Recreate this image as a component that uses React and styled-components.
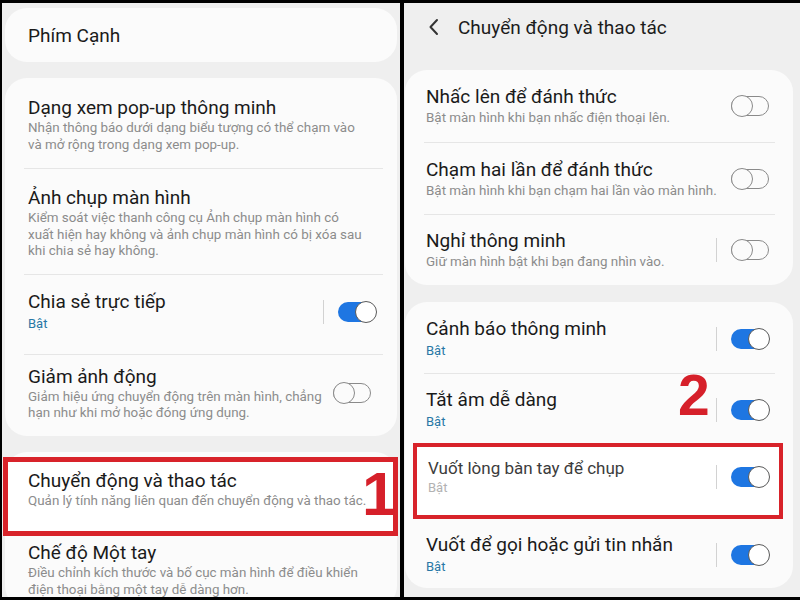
import React from 'react';
import styled, { createGlobalStyle } from 'styled-components';

const GlobalStyle = createGlobalStyle`
  html, body { margin: 0; padding: 0; background: #000; }
  body { font-family: Roboto, "Noto Sans", "Liberation Sans", sans-serif; }
`;

const Frame = styled.div`
  width: 800px;
  height: 600px;
  box-sizing: border-box;
  padding: 3px 0 3px 2px;
  display: grid;
  grid-template-columns: 398px 1fr;
  column-gap: 4px;
  background: #000;
`;

const Panel = styled.div`
  background: #efefef;
  overflow: hidden;
  display: flex;
  flex-direction: column;
  padding: ${({ $pad }) => $pad};
`;

const Header = styled.div`
  height: 48px;
  display: flex;
  align-items: center;
  padding-left: 24px;
  margin-bottom: 19px;
  color: #1c1c1c;
  font-size: 19px;
  gap: 18px;
`;

const Card = styled.div`
  background: #fbfbfb;
  border-radius: 22px;
  padding: ${({ $pad }) => $pad || '0 14px 0 19px'};
  margin: ${({ $margin }) => $margin || '0 3px 16px'};
  flex: none;
`;

const Row = styled.div`
  position: relative;
  display: flex;
  align-items: center;
  padding: ${({ $pad }) => $pad || '15px 6px 14px 4px'};
  border-top: ${({ $line }) => ($line ? '1px solid #e6e6e6' : 'none')};
`;

const BoxedRow = styled(Row)`
  border: ${({ $bw }) => $bw}px solid #d8232a;
  background: #fff;
  margin: ${({ $margin }) => $margin};
`;

const Texts = styled.div`
  flex: 1;
  min-width: 0;
`;

const Title = styled.div`
  font-size: ${({ $small }) => ($small ? '17px' : '19px')};
  line-height: ${({ $small }) => ($small ? '22px' : '24px')};
  color: ${({ $small }) => ($small ? '#3c3c3c' : '#1a1a1a')};
  white-space: nowrap;
`;

const Sub = styled.div`
  font-size: 13.4px;
  line-height: ${({ $lh }) => $lh || '16.5px'};
  color: #8c8c8c;
  white-space: nowrap;
`;

const Status = styled.div`
  font-size: 13px;
  line-height: ${({ $lh }) => $lh || '20px'};
  color: ${({ $muted }) => ($muted ? '#b2b2b2' : '#2878a6')};
`;

const Sep = styled.span`
  width: 1px;
  height: 24px;
  background: #d2d2d2;
  margin-right: 14px;
  flex: none;
`;

const Toggle = styled.span`
  position: relative;
  width: 39px;
  height: 24px;
  flex: none;
  &::before {
    content: '';
    position: absolute;
    left: 0;
    top: 2px;
    width: 38px;
    height: 20px;
    border-radius: 10px;
    box-sizing: border-box;
    background: ${({ $on }) => ($on ? '#1e76e2' : 'transparent')};
    border: ${({ $on }) => ($on ? 'none' : '1.5px solid #8a8a8a')};
  }
  &::after {
    content: '';
    position: absolute;
    top: 1px;
    ${({ $on }) => ($on ? 'right: 0;' : 'left: 0;')}
    width: 22px;
    height: 22px;
    border-radius: 50%;
    box-sizing: border-box;
    background: ${({ $on }) => ($on ? '#fff' : '#fbfbfb')};
    border: 1.5px solid ${({ $on }) => ($on ? '#5a5a5a' : '#8a8a8a')};
  }
`;

const Mark = styled.span`
  position: absolute;
  font-family: "Liberation Sans", Arial, sans-serif;
  font-weight: 700;
  line-height: 1;
  color: #d6202a;
  font-size: ${({ $size }) => $size}px;
  top: ${({ $top }) => $top}px;
  left: ${({ $left }) => $left}px;
`;

const Back = () => (
  <svg width="12" height="18" viewBox="0 0 12 18" fill="none">
    <path d="M9 2 L2.5 9 L9 16" stroke="#333" strokeWidth="2" strokeLinecap="round" strokeLinejoin="round" />
  </svg>
);

const Control = ({ on, sep }) => (
  <>
    {sep && <Sep />}
    <Toggle $on={on} />
  </>
);

export default function App() {
  return (
    <>
      <GlobalStyle />
      <Frame>
        {/* left screenshot */}
        <Panel $pad="5px 0 0 0">
          <Card>
            <Row $pad="16px 6px 14px 4px">
              <Texts><Title>Phím Cạnh</Title></Texts>
            </Row>
          </Card>

          <Card>
            <Row $pad="18px 6px 15px 4px">
              <Texts>
                <Title>Dạng xem pop-up thông minh</Title>
                <Sub>Nhận thông báo dưới dạng biểu tượng có thể chạm vào</Sub>
                <Sub>và mở rộng trong dạng xem pop-up.</Sub>
              </Texts>
            </Row>
            <Row $line $pad="17px 6px 14px 4px">
              <Texts>
                <Title>Ảnh chụp màn hình</Title>
                <Sub>Kiểm soát việc thanh công cụ Ảnh chụp màn hình có</Sub>
                <Sub>xuất hiện hay không và ảnh chụp màn hình có bị xóa sau</Sub>
                <Sub>khi chia sẻ hay không.</Sub>
              </Texts>
            </Row>
            <Row $line $pad="15px 6px 20px 4px">
              <Texts>
                <Title>Chia sẻ trực tiếp</Title>
                <Status>Bật</Status>
              </Texts>
              <Control on sep />
            </Row>
            <Row $line $pad="10px 11px 14px 4px">
              <Texts>
                <Title>Giảm ảnh động</Title>
                <Sub>Giảm hiệu ứng chuyển động trên màn hình, chẳng</Sub>
                <Sub>hạn như khi mở hoặc đóng ứng dụng.</Sub>
              </Texts>
              <Control />
            </Row>
          </Card>

          <Card $pad="5px 14px 0 19px" $margin="0 3px">
            <BoxedRow $bw={5} $margin="0 -15px 0 -21px" $pad="7px 6px 22px 20px">
              <Texts>
                <Title>Chuyển động và thao tác</Title>
                <Sub>Quản lý tính năng liên quan đến chuyển động và thao tác.</Sub>
              </Texts>
              <Mark $size={62} $top={1} $left={354}>1</Mark>
            </BoxedRow>
            <Row $pad="5px 6px 10px 4px">
              <Texts>
                <Title>Chế độ Một tay</Title>
                <Sub>Điều chỉnh kích thước và bố cục màn hình để điều khiển</Sub>
                <Sub>điện thoại bằng một tay dễ dàng hơn.</Sub>
              </Texts>
            </Row>
          </Card>
        </Panel>

        {/* right screenshot */}
        <Panel $pad="0">
          <Header>
            <Back />
            <span>Chuyển động và thao tác</span>
          </Header>

          <Card $pad="0 18px 0 19px" $margin="0 7px 17px 1px">
            <Row $pad="15px 5px 15px 2px">
              <Texts>
                <Title>Nhấc lên để đánh thức</Title>
                <Sub $lh="18px">Bật màn hình khi bạn nhấc điện thoại lên.</Sub>
              </Texts>
              <Control />
            </Row>
            <Row $line $pad="15px 5px 14px 2px">
              <Texts>
                <Title>Chạm hai lần để đánh thức</Title>
                <Sub $lh="18px">Bật màn hình khi bạn chạm hai lần vào màn hình.</Sub>
              </Texts>
              <Control />
            </Row>
            <Row $line $pad="14px 5px 14px 2px">
              <Texts>
                <Title>Nghỉ thông minh</Title>
                <Sub $lh="18px">Giữ màn hình bật khi bạn đang nhìn vào.</Sub>
              </Texts>
              <Control sep />
            </Row>
          </Card>

          <Card $pad="0 18px 0 19px" $margin="0 7px 0 1px">
            <Row $pad="15px 5px 12px 2px">
              <Texts>
                <Title>Cảnh báo thông minh</Title>
                <Status>Bật</Status>
              </Texts>
              <Control on sep />
            </Row>
            <Row $line $pad="14px 5px 11px 2px">
              <Texts>
                <Title>Tắt âm dễ dàng</Title>
                <Status>Bật</Status>
              </Texts>
              <Mark $size={57} $top={-7} $left={254}>2</Mark>
              <Control on sep />
            </Row>
            <BoxedRow $bw={4} $margin="0 -8px 0 -11px" $pad="10px 9px 18px 11px">
              <Texts>
                <Title $small>Vuốt lòng bàn tay để chụp</Title>
                <Status $muted $lh="18px">Bật</Status>
              </Texts>
              <Control on sep />
            </BoxedRow>
            <Row $pad="14px 5px 11px 2px">
              <Texts>
                <Title>Vuốt để gọi hoặc gửi tin nhắn</Title>
                <Status>Bật</Status>
              </Texts>
              <Control on sep />
            </Row>
          </Card>
        </Panel>
      </Frame>
    </>
  );
}
